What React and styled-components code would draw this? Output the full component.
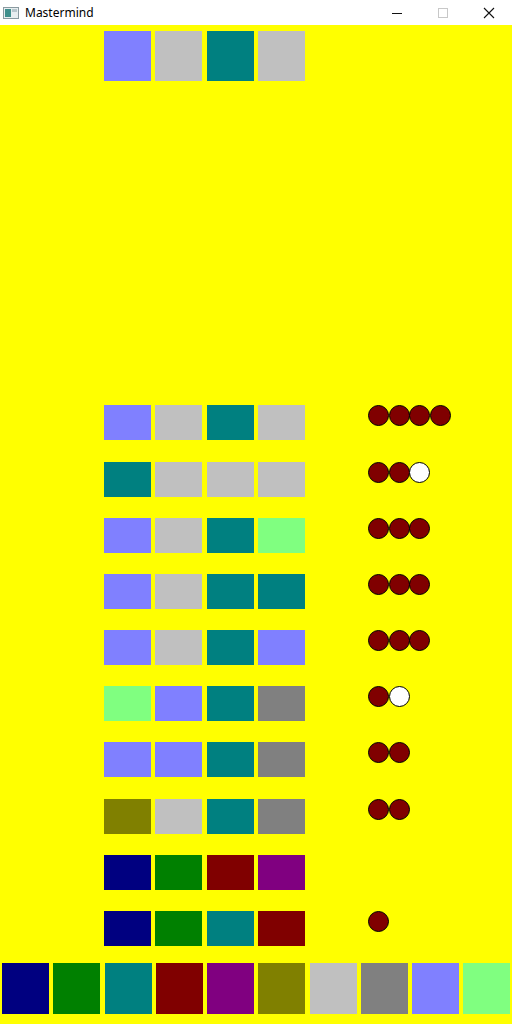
import React from 'react';
import styled, { createGlobalStyle } from 'styled-components';

const COLORS = {
  navy: '#000080',
  green: '#008000',
  teal: '#008080',
  maroon: '#800000',
  purple: '#800080',
  olive: '#808000',
  silver: '#C0C0C0',
  gray: '#808080',
  blue: '#8080FF',
  lime: '#80FF80'
};

const PALETTE = ['navy', 'green', 'teal', 'maroon', 'purple', 'olive', 'silver', 'gray', 'blue', 'lime'];

const SECRET = ['blue', 'silver', 'teal', 'silver'];

// each guess: the four colours, then black (exact) and white (colour only) pegs
const GUESSES = [
  { colors: ['blue', 'silver', 'teal', 'silver'], black: 4, white: 0 },
  { colors: ['teal', 'silver', 'silver', 'silver'], black: 2, white: 1 },
  { colors: ['blue', 'silver', 'teal', 'lime'], black: 3, white: 0 },
  { colors: ['blue', 'silver', 'teal', 'teal'], black: 3, white: 0 },
  { colors: ['blue', 'silver', 'teal', 'blue'], black: 3, white: 0 },
  { colors: ['lime', 'blue', 'teal', 'gray'], black: 1, white: 1 },
  { colors: ['blue', 'blue', 'teal', 'gray'], black: 2, white: 0 },
  { colors: ['olive', 'silver', 'teal', 'gray'], black: 2, white: 0 },
  { colors: ['navy', 'green', 'maroon', 'purple'], black: 0, white: 0 },
  { colors: ['navy', 'green', 'teal', 'maroon'], black: 1, white: 0 }
];

const GlobalStyle = createGlobalStyle`
  html, body {
    margin: 0;
    padding: 0;
  }
  body {
    font-family: "Noto Sans", "Open Sans", sans-serif;
  }
`;

const App = () => {
  return (
    <Window>
      <GlobalStyle />
      <TitleBar>
        <AppIcon width='16' height='14' viewBox='0 0 16 14'>
          <rect x='0.5' y='1.5' width='15' height='11' fill='#e8eef0' stroke='#8a9aa0' />
          <rect x='2' y='3' width='6' height='8' fill='#3f8f8c' />
          <rect x='9' y='3' width='5' height='3' fill='#b8c6cc' />
        </AppIcon>
        <Title>Mastermind</Title>
        <Controls>
          <ControlButton>
            <svg width='12' height='12' viewBox='0 0 12 12'>
              <line x1='1' y1='6.5' x2='11' y2='6.5' stroke='#111' strokeWidth='1' />
            </svg>
          </ControlButton>
          <ControlButton>
            <svg width='12' height='12' viewBox='0 0 12 12'>
              <rect x='1.5' y='1.5' width='9' height='9' fill='none' stroke='#c8c8c8' />
            </svg>
          </ControlButton>
          <ControlButton>
            <svg width='12' height='12' viewBox='0 0 12 12'>
              <path d='M1 1 L11 11 M11 1 L1 11' stroke='#111' strokeWidth='1.1' />
            </svg>
          </ControlButton>
        </Controls>
      </TitleBar>
      <Board>
        <SecretRow>
          {SECRET.map((c, i) => (
            <Peg key={i} color={COLORS[c]} tall />
          ))}
        </SecretRow>
        <GuessList>
          {GUESSES.map((g, i) => (
            <GuessRow key={i}>
              <Code>
                {g.colors.map((c, j) => (
                  <Peg key={j} color={COLORS[c]} />
                ))}
              </Code>
              <Score>
                {Array.from({ length: g.black }).map((_, j) => (
                  <KeyPeg key={'b' + j} />
                ))}
                {Array.from({ length: g.white }).map((_, j) => (
                  <KeyPeg key={'w' + j} white />
                ))}
              </Score>
            </GuessRow>
          ))}
        </GuessList>
        <Palette>
          {PALETTE.map((c) => (
            <PaletteSwatch key={c} color={COLORS[c]} />
          ))}
        </Palette>
      </Board>
    </Window>
  );
};

const Window = styled.div`
  width: 512px;
  height: 1024px;
  display: flex;
  flex-direction: column;
  overflow: hidden;
`;

const TitleBar = styled.header`
  height: 25px;
  flex-shrink: 0;
  background: #ffffff;
  display: flex;
  align-items: center;
  padding-left: 3px;
`;

const AppIcon = styled.svg`
  display: block;
  margin-top: 1px;
`;

const Title = styled.span`
  margin-left: 6px;
  font-size: 12px;
  color: #000;
`;

const Controls = styled.div`
  margin-left: auto;
  display: flex;
  height: 100%;
`;

const ControlButton = styled.div`
  width: 46px;
  height: 100%;
  display: flex;
  align-items: center;
  justify-content: center;
  padding-top: 1px;
  box-sizing: border-box;
`;

const Board = styled.main`
  flex: 1;
  background: #ffff00;
  display: flex;
  flex-direction: column;
  padding-bottom: 10px;
`;

const SecretRow = styled.div`
  display: flex;
  gap: 4.3px;
  padding: 6px 0 0 104px;
`;

const Peg = styled.div`
  width: 47px;
  height: ${({ tall }) => (tall ? '50px' : '35px')};
  background: ${({ color }) => color};
`;

const GuessList = styled.section`
  margin-top: auto;
  display: flex;
  flex-direction: column;
  gap: 21.2px;
`;

const GuessRow = styled.div`
  display: flex;
  padding-left: 104px;
`;

const Code = styled.div`
  display: flex;
  gap: 4.3px;
`;

const Score = styled.div`
  display: flex;
  align-items: flex-start;
  margin-left: 63px;
`;

const KeyPeg = styled.span`
  width: 21px;
  height: 21px;
  box-sizing: border-box;
  border-radius: 50%;
  border: 1px solid #000;
  background: ${({ white }) => (white ? '#ffffff' : COLORS.maroon)};

  & + & {
    margin-left: -0.4px;
  }
`;

const Palette = styled.div`
  margin-top: 17px;
  display: flex;
  gap: 4.25px;
  padding-left: 2px;
`;

const PaletteSwatch = styled.div`
  width: 47px;
  height: 51px;
  background: ${({ color }) => color};
`;

export default App;
